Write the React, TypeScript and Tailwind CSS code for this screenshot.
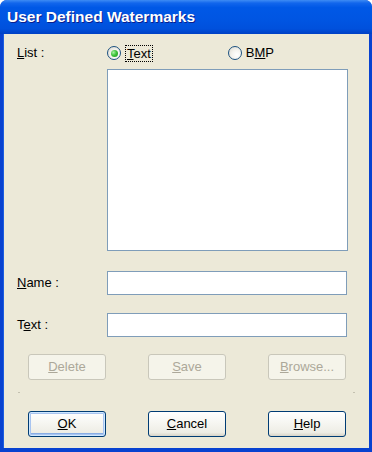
import React from "react";

const font = { fontFamily: '"Liberation Sans", Arial, sans-serif' };

function Radio({ checked }: { checked?: boolean }) {
  return (
    <span className="flex h-[14px] w-[14px] items-center justify-center rounded-full border border-[#1C5180] bg-[radial-gradient(circle_at_65%_65%,#ffffff_0%,#f4f3ee_45%,#d8d6cc_100%)]">
      {checked && (
        <span className="h-[7px] w-[7px] rounded-full bg-[radial-gradient(circle_at_35%_35%,#a8f2a3_0%,#3fc43b_45%,#1f8f1c_100%)]" />
      )}
    </span>
  );
}

function Btn({
  children,
  disabled,
  def,
}: {
  children: React.ReactNode;
  disabled?: boolean;
  def?: boolean;
}) {
  if (disabled) {
    return (
      <div className="flex h-[26px] w-[78px] items-center justify-center rounded-[3px] border border-[#C9C7BA] bg-[#F5F4EA] text-[13px] text-[#ACA899]">
        {children}
      </div>
    );
  }
  return (
    <div
      className={
        "flex h-[26px] w-[78px] items-center justify-center rounded-[3px] border border-[#003C74] bg-[linear-gradient(180deg,#ffffff_0%,#f7f7f3_40%,#eeede5_85%,#d8d4c8_100%)] text-[13px] text-black " +
        (def
          ? "shadow-[inset_0_0_0_1px_#CEE7FF,inset_0_0_0_2px_#A8C4F0,inset_0_-1px_0_2px_#89ADE4]"
          : "")
      }
    >
      {children}
    </div>
  );
}

function Field() {
  return <div className="h-[24px] w-[240px] border border-[#7F9DB9] bg-white" />;
}

export default function App() {
  return (
    <div className="h-[452px] w-[372px] bg-white" style={font}>
      <div className="flex h-full w-full flex-col overflow-hidden rounded-t-[7px] bg-[#0842D0]">
        <div className="flex h-[34px] shrink-0 items-center bg-[linear-gradient(180deg,#3E8CF4_0%,#1266EC_9%,#0058E6_22%,#0055E2_60%,#0050DC_85%,#0040C4_100%)] pl-[7px]">
          <span
            className="text-[15.5px] font-bold text-white [text-shadow:1px_1px_0_#0A1E8C]"
            style={{ fontFamily: '"Liberation Sans", Arial, sans-serif' }}
          >
            User Defined Watermarks
          </span>
        </div>
        <div className="mx-[3px] mb-[4px] flex flex-1 flex-col border-l border-l-[#1C5DE0] bg-[#ECE9D8] text-[13px] text-black">
          <div className="mt-[10px] flex h-[18px] items-center">
            <span className="w-[103px] pl-[13px]">
              <u>L</u>ist :
            </span>
            <Radio checked />
            <span className="ml-[4px] border border-dotted border-black px-[1px] leading-[15px]">
              <u>T</u>ext
            </span>
            <span className="ml-[75px]">
              <Radio />
            </span>
            <span className="ml-[4px]">
              B<u>M</u>P
            </span>
          </div>
          <div className="ml-[103px] mt-[7px] h-[182px] w-[241px] border border-[#7F9DB9] bg-white" />
          <div className="mt-[20px] flex items-center">
            <span className="w-[103px] pl-[13px]">
              <u>N</u>ame :
            </span>
            <Field />
          </div>
          <div className="mt-[18px] flex items-center">
            <span className="w-[103px] pl-[13px]">
              T<u>e</u>xt :
            </span>
            <Field />
          </div>
          <div className="ml-[24px] mt-[17px] flex gap-[42px]">
            <Btn disabled>
              <u>D</u>elete
            </Btn>
            <Btn disabled>
              <u>S</u>ave
            </Btn>
            <Btn disabled>
              <u>B</u>rowse...
            </Btn>
          </div>
          <div className="mx-[14px] mt-[12px] flex h-[2px] justify-between">
            <span className="h-[1px] w-[2px] bg-[#C4C1B0]" />
            <span className="h-[1px] w-[2px] bg-[#C4C1B0]" />
          </div>
          <div className="ml-[24px] mt-[17px] flex gap-[42px]">
            <Btn def>
              <u>O</u>K
            </Btn>
            <Btn>
              <u>C</u>ancel
            </Btn>
            <Btn>
              <u>H</u>elp
            </Btn>
          </div>
        </div>
      </div>
    </div>
  );
}
